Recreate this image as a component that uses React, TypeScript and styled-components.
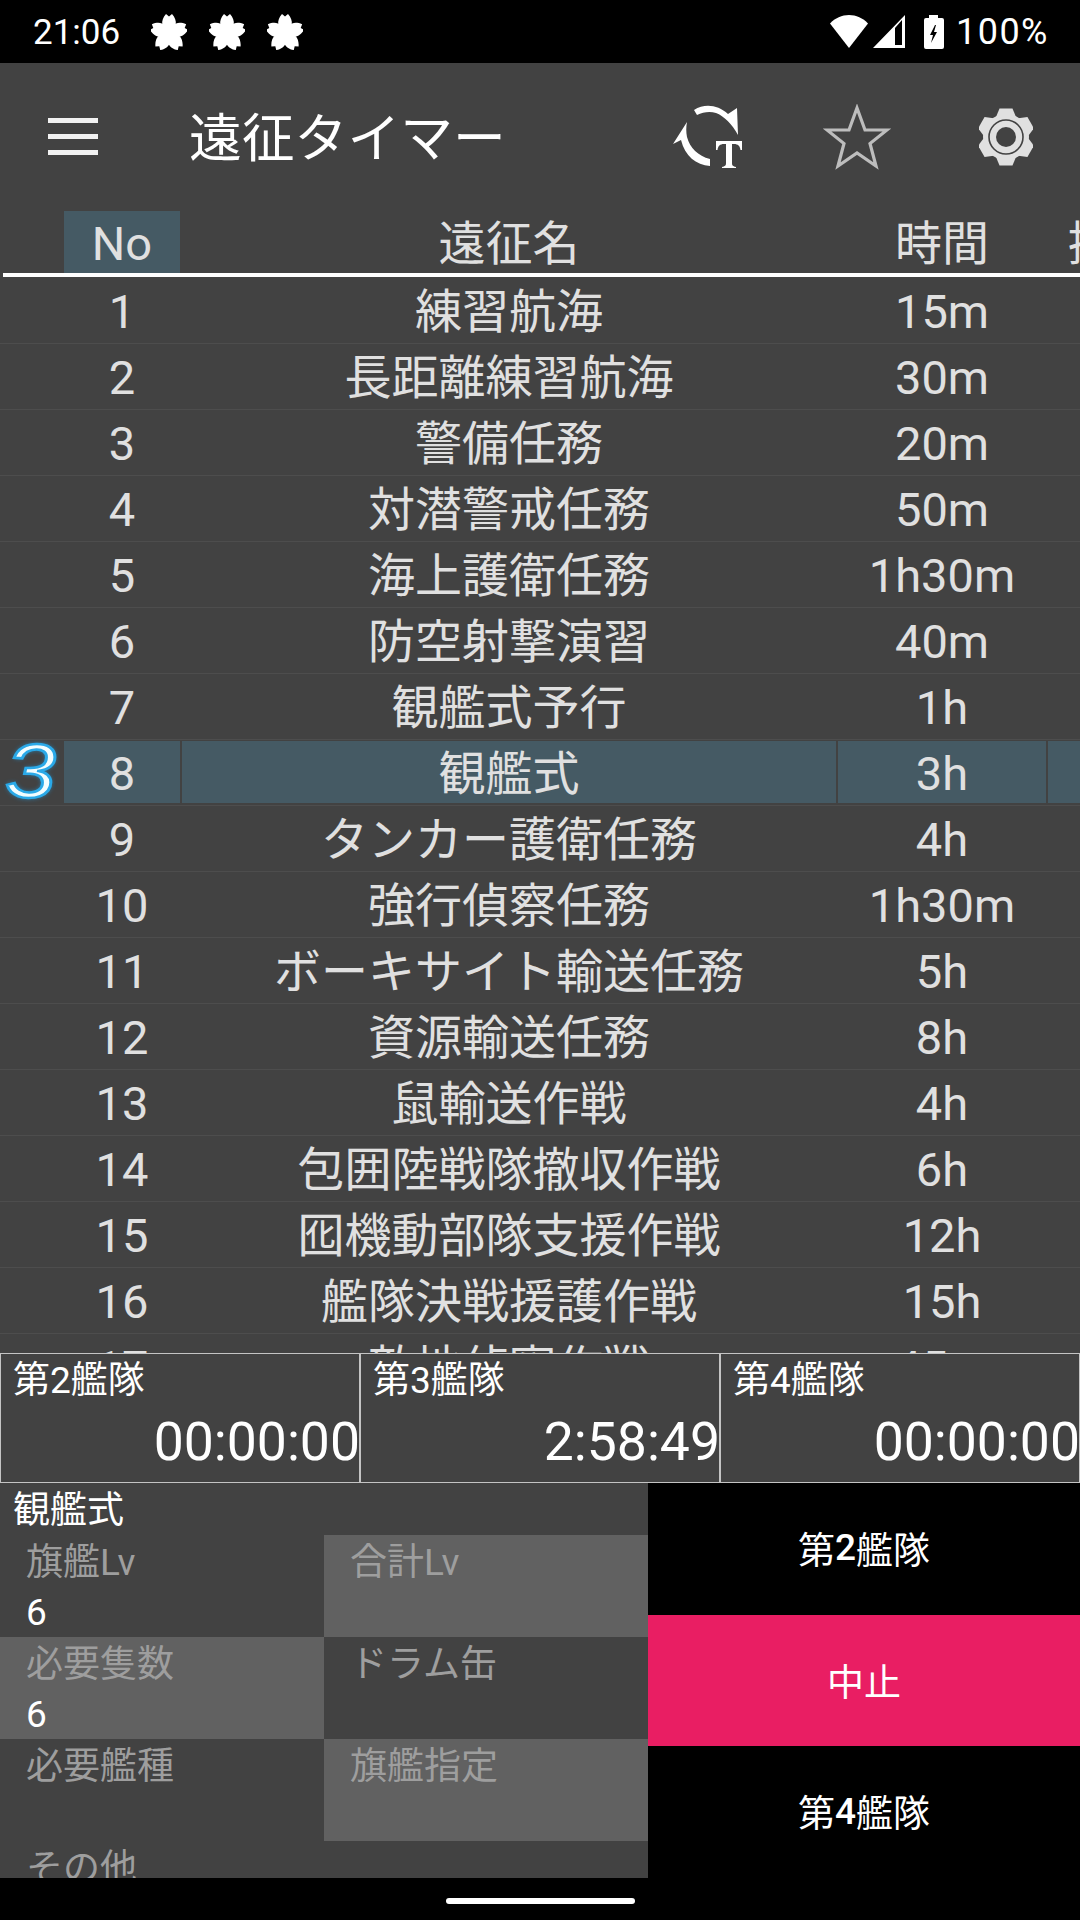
import React from "react";
import styled, { createGlobalStyle } from "styled-components";

const GlobalStyle = createGlobalStyle`
  html, body {
    margin: 0;
    padding: 0;
    background: #000;
  }
  body {
    font-family: Roboto, "Noto Sans CJK JP", sans-serif;
  }
`;

const expeditions = [
  ["1", "練習航海", "15m"],
  ["2", "長距離練習航海", "30m"],
  ["3", "警備任務", "20m"],
  ["4", "対潜警戒任務", "50m"],
  ["5", "海上護衛任務", "1h30m"],
  ["6", "防空射撃演習", "40m"],
  ["7", "観艦式予行", "1h"],
  ["8", "観艦式", "3h"],
  ["9", "タンカー護衛任務", "4h"],
  ["10", "強行偵察任務", "1h30m"],
  ["11", "ボーキサイト輸送任務", "5h"],
  ["12", "資源輸送任務", "8h"],
  ["13", "鼠輸送作戦", "4h"],
  ["14", "包囲陸戦隊撤収作戦", "6h"],
  ["15", "囮機動部隊支援作戦", "12h"],
  ["16", "艦隊決戦援護作戦", "15h"],
  ["17", "敵地偵察作戦", "45m"],
];

const Screen = styled.div`
  width: 1080px;
  height: 1920px;
  overflow: hidden;
  display: flex;
  flex-direction: column;
  background: #000;
`;

const StatusBar = styled.div`
  height: 63px;
  flex: none;
  display: flex;
  align-items: center;
  padding: 0 33px;
  color: #fff;
  font-size: 35px;
  box-sizing: border-box;
`;

const StatusTime = styled.span`
  width: 118px;
  line-height: 63px;
  padding-top: 2px;
`;

const Sakuras = styled.div`
  display: flex;
  gap: 22px;
  flex: 1;
`;

const StatusIcons = styled.div`
  display: flex;
  align-items: center;
`;

const Battery = styled.span`
  line-height: 63px;
  padding-top: 2px;
  margin: 0 -2px 0 12px;
  font-size: 36px;
  letter-spacing: 1.5px;
`;

const AppBar = styled.div`
  height: 147px;
  flex: none;
  display: flex;
  align-items: center;
  background: #424242;
`;

const MenuButton = styled.div`
  width: 189px;
  padding-left: 48px;
  box-sizing: border-box;
  flex: none;
  display: flex;
  flex-direction: column;
  gap: 11px;
`;

const MenuLine = styled.div`
  width: 50px;
  height: 5px;
  background: #f2f2f2;
`;

const Title = styled.div`
  flex: 1;
  color: #fff;
  font-size: 52.8px;
  line-height: 60px;
  padding-top: 4px;
`;

const ActionIcons = styled.div`
  display: flex;
  align-items: center;
  width: 448px;
  flex: none;
`;

const ActionSlot = styled.div<{ $width: number }>`
  width: ${(p) => p.$width}px;
  display: flex;
  justify-content: center;
`;

const TableArea = styled.div`
  height: 1143px;
  flex: none;
  overflow: hidden;
  background: #424242;
`;

const HeaderRow = styled.div`
  display: flex;
  height: 63px;
  padding-top: 1px;
  box-sizing: border-box;
  color: #e0e0e0;
  font-size: 47px;
`;

const RowBody = styled.div`
  display: flex;
  height: 66px;
  padding: 1px 0 2px;
  box-sizing: border-box;
  color: #e0e0e0;
  font-size: 47px;
  border-bottom: 1px solid #4d4d4d;
  position: relative;
`;

const MarkCell = styled.div`
  width: 64px;
  flex: none;
`;

const Cell = styled.div<{ $width: number; $active?: boolean }>`
  width: ${(p) => p.$width}px;
  flex: none;
  margin-right: 2px;
  padding-top: 3px;
  box-sizing: border-box;
  line-height: 60px;
  text-align: center;
  white-space: nowrap;
  background: ${(p) => (p.$active ? "#455a64" : "transparent")};
`;

const HeaderLine = styled.div`
  height: 4px;
  margin: 0 0 1px 3px;
  background: #fff;
`;

const FleetMark = styled.span`
  position: absolute;
  left: 5px;
  top: -8px;
  font-family: "Liberation Sans", sans-serif;
  font-style: italic;
  font-size: 76px;
  line-height: 78px;
  color: #f2fdff;
  -webkit-text-stroke: 2.5px #2aa9e8;
  text-shadow: 0 0 5px #1e9be0;
  transform: scaleX(1.2);
  transform-origin: left center;
`;

const TimerRow = styled.div`
  height: 130px;
  flex: none;
  display: flex;
  background: #424242;
`;

const TimerBox = styled.div`
  width: 360px;
  box-sizing: border-box;
  border: 1px solid #c4c4c4;
  color: #fff;
  display: flex;
  flex-direction: column;
`;

const TimerLabel = styled.div`
  font-size: 37px;
  line-height: 44px;
  padding: 5px 0 0 12px;
`;

const TimerValue = styled.div`
  font-size: 53.5px;
  line-height: 64px;
  text-align: right;
  margin: 7px -1px 0 0;
`;

const Bottom = styled.div`
  height: 395px;
  flex: none;
  display: flex;
`;

const Details = styled.div`
  width: 648px;
  flex: none;
  background: #424242;
  overflow: hidden;
`;

const DetailTitle = styled.div`
  height: 52px;
  box-sizing: border-box;
  color: #fff;
  font-size: 37px;
  line-height: 49px;
  padding: 3px 0 0 13px;
`;

const DetailGrid = styled.div`
  display: grid;
  grid-template-columns: 324px 324px;
  grid-auto-rows: 102px;
`;

const DetailCell = styled.div<{ $shaded?: boolean }>`
  background: ${(p) => (p.$shaded ? "#616161" : "transparent")};
  padding-left: 26px;
`;

const DetailLabel = styled.div`
  color: #9e9e9e;
  font-size: 37px;
  line-height: 48px;
  padding-top: 4px;
`;

const DetailValue = styled.div`
  color: #fff;
  font-size: 37px;
  line-height: 52px;
`;

const Actions = styled.div`
  flex: 1;
  display: flex;
  flex-direction: column;
`;

const ActionButton = styled.div<{ $stop?: boolean }>`
  flex: 1;
  display: flex;
  align-items: center;
  justify-content: center;
  padding-bottom: 2px;
  color: #fff;
  font-size: 37px;
  background: ${(p) => (p.$stop ? "#e91e63" : "#000")};
`;

const BoldDigit = styled.span`
  font-weight: 500;
`;

const NavBar = styled.div`
  flex: 1;
  display: flex;
  justify-content: center;
  padding: 20px 0 0 0;
`;

const HomeIndicator = styled.div`
  width: 189px;
  height: 6px;
  border-radius: 3px;
  background: #fff;
`;

const Sakura = () => (
  <svg width="36" height="36" viewBox="-18 -19 36 36">
    <circle cx="0" cy="0" r="7.500" fill="#fff" />
    {[0, 72, 144, 216, 288].map((angle) => (
      <path
        key={angle}
        fill="#fff"
        transform={`rotate(${angle})`}
        d="M0 0C-8-5-9-12-3-19L0-16.500 3-19C9-12 8-5 0 0z"
      />
    ))}
  </svg>
);

const WifiIcon = () => (
  <svg width="38" height="33" viewBox="0 0 38 33">
    <path fill="#fff" d="M0 8.500C5 3 12 0 19 0s14 3 19 8.500L19 33z" />
  </svg>
);

const SignalIcon = () => (
  <svg width="32" height="33" viewBox="0 0 32 33" style={{ marginLeft: 5 }}>
    <path
      fill="#fff"
      fillRule="evenodd"
      d="M0 33L32 0v33zM22 13v17h7V5z"
    />
  </svg>
);

const BatteryIcon = () => (
  <svg width="20" height="34" viewBox="0 0 20 34" style={{ marginLeft: 19 }}>
    <path
      fill="#fff"
      d="M5 0h9v3h4a2 2 0 0 1 2 2v27a2 2 0 0 1-2 2H2a2 2 0 0 1-2-2V5a2 2 0 0 1 2-2h3z"
    />
    <path fill="#000" d="M11 10l-5 10h3l-2 8 6-11h-3l2-7z" />
  </svg>
);

const TimerSyncIcon = () => (
  <svg width="75" height="73" viewBox="10 10 75 73">
    <path
      fill="#fff"
      d="M34 20C45 13 58 15 68 24L77 18 78 45C72 34 64 26 56 23 50 21 43 22 37 25z"
    />
    <path
      fill="#fff"
      d="M13 54L27 32C26 37 26 42 27 47 30 58 38 66 50 69V76C36 75 25 66 21 50z"
    />
    <path
      fill="#fff"
      d="M56 51H82V60H80.500C80 56 78 54 74 54H72V73C72 76 73 76 76 77V78H62V77C65 76 66 76 66 73V54H64C60 54 58 56 57.500 60H56z"
    />
  </svg>
);

const StarIcon = () => (
  <svg width="68" height="66" viewBox="0 0 68 66">
    <path
      fill="none"
      stroke="#bdbdbd"
      strokeWidth="3.200"
      d="M34 4L42 26H64L47 39.500 53 62 34 49 15 62 21 39.500 4 26H26z"
    />
  </svg>
);

const GearIcon = () => (
  <svg width="54" height="58" viewBox="-27 -29 54 58">
    <circle cx="0" cy="0" r="23" fill="#e0e0e0" />
    {[0, 60, 120, 180, 240, 300].map((angle) => (
      <path
        key={angle}
        fill="#e0e0e0"
        transform={`rotate(${angle})`}
        d="M-10-20L-6.500-28.500H6.500L10-20z"
      />
    ))}
    <circle cx="0" cy="0" r="10" fill="#424242" />
    <circle cx="0" cy="0" r="17" fill="none" stroke="#424242" strokeWidth="1.600" />
  </svg>
);

const fleetTimers = [
  ["第2艦隊", "00:00:00"],
  ["第3艦隊", "2:58:49"],
  ["第4艦隊", "00:00:00"],
];

const App = () => {
  return (
    <>
      <GlobalStyle />
      <Screen>
        <StatusBar>
          <StatusTime>21:06</StatusTime>
          <Sakuras>
            <Sakura />
            <Sakura />
            <Sakura />
          </Sakuras>
          <StatusIcons>
            <WifiIcon />
            <SignalIcon />
            <BatteryIcon />
            <Battery>100%</Battery>
          </StatusIcons>
        </StatusBar>
        <AppBar>
          <MenuButton>
            <MenuLine />
            <MenuLine />
            <MenuLine />
          </MenuButton>
          <Title>遠征タイマー</Title>
          <ActionIcons>
            <ActionSlot $width={150}>
              <TimerSyncIcon />
            </ActionSlot>
            <ActionSlot $width={150}>
              <StarIcon />
            </ActionSlot>
            <ActionSlot $width={148}>
              <GearIcon />
            </ActionSlot>
          </ActionIcons>
        </AppBar>
        <TableArea>
          <HeaderRow>
            <MarkCell />
            <Cell $width={116} $active>
              No
            </Cell>
            <Cell $width={654}>遠征名</Cell>
            <Cell $width={208}>時間</Cell>
            <Cell $width={134}>提督</Cell>
          </HeaderRow>
          <HeaderLine />
          {expeditions.map(([no, name, time]) => {
            const selected = no === "8";
            return (
              <RowBody key={no}>
                <MarkCell>{selected && <FleetMark>3</FleetMark>}</MarkCell>
                <Cell $width={116} $active={selected}>
                  {no}
                </Cell>
                <Cell $width={654} $active={selected}>
                  {name}
                </Cell>
                <Cell $width={208} $active={selected}>
                  {time}
                </Cell>
                <Cell $width={134} $active={selected} />
              </RowBody>
            );
          })}
        </TableArea>
        <TimerRow>
          {fleetTimers.map(([label, value]) => (
            <TimerBox key={label}>
              <TimerLabel>{label}</TimerLabel>
              <TimerValue>{value}</TimerValue>
            </TimerBox>
          ))}
        </TimerRow>
        <Bottom>
          <Details>
            <DetailTitle>観艦式</DetailTitle>
            <DetailGrid>
              <DetailCell>
                <DetailLabel>旗艦Lv</DetailLabel>
                <DetailValue>6</DetailValue>
              </DetailCell>
              <DetailCell $shaded>
                <DetailLabel>合計Lv</DetailLabel>
              </DetailCell>
              <DetailCell $shaded>
                <DetailLabel>必要隻数</DetailLabel>
                <DetailValue>6</DetailValue>
              </DetailCell>
              <DetailCell>
                <DetailLabel>ドラム缶</DetailLabel>
              </DetailCell>
              <DetailCell>
                <DetailLabel>必要艦種</DetailLabel>
              </DetailCell>
              <DetailCell $shaded>
                <DetailLabel>旗艦指定</DetailLabel>
              </DetailCell>
              <DetailCell>
                <DetailLabel>その他</DetailLabel>
              </DetailCell>
            </DetailGrid>
          </Details>
          <Actions>
            <ActionButton>
              第<BoldDigit>2</BoldDigit>艦隊
            </ActionButton>
            <ActionButton $stop>中止</ActionButton>
            <ActionButton>
              第<BoldDigit>4</BoldDigit>艦隊
            </ActionButton>
          </Actions>
        </Bottom>
        <NavBar>
          <HomeIndicator />
        </NavBar>
      </Screen>
    </>
  );
};

export default App;
